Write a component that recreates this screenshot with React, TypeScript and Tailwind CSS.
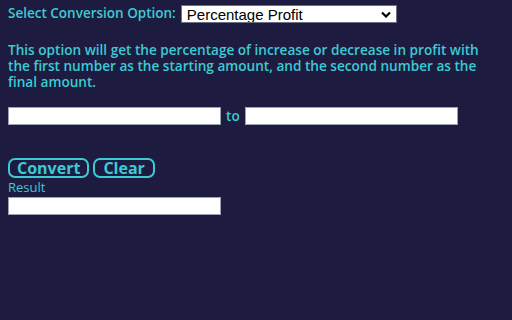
import { useState } from 'react';

const options = ['Percentage Profit', 'Percentage Change', 'Percentage Of'];

export default function App() {
  const [option, setOption] = useState(options[0]);
  const [first, setFirst] = useState('');
  const [second, setSecond] = useState('');
  const [result, setResult] = useState('');

  const convert = () => {
    const a = parseFloat(first);
    const b = parseFloat(second);
    if (isNaN(a) || isNaN(b) || a === 0) return;
    setResult((((b - a) / a) * 100).toFixed(2) + '%');
  };

  const clear = () => {
    setFirst('');
    setSecond('');
    setResult('');
  };

  return (
    <div className="w-[512px] h-[320px] bg-[#1e1b40] text-[#3ccad3] px-2 pt-[5px] font-['Open_Sans','Noto_Sans',sans-serif] overflow-hidden">
      {/* Option select */}
      <div className="flex items-center h-[18px]">
        <span className="text-[13.5px] font-semibold leading-none">Select Conversion Option:</span>
        <div className="relative flex ml-[5px]">
          <select
            value={option}
            onChange={(e) => setOption(e.target.value)}
            className="appearance-none w-[216px] h-[18px] bg-white text-black text-[15px] leading-none pl-[5px] border border-gray-500 font-['Liberation_Sans',Arial,sans-serif] outline-none"
          >
            {options.map((o) => (
              <option key={o} value={o}>
                {o}
              </option>
            ))}
          </select>
          <svg
            className="absolute right-[6px] top-[6px] w-[10px] h-[7px] pointer-events-none"
            viewBox="0 0 10 7"
            fill="none"
            stroke="black"
            strokeWidth="2.2"
          >
            <path d="M1 1.5l4 4 4-4" />
          </svg>
        </div>
      </div>

      {/* Description */}
      <p className="mt-[19px] text-[13.6px] font-semibold leading-[16px] w-[490px]">
        This option will get the percentage of increase or decrease in profit with the first number as the starting
        amount, and the second number as the final amount.
      </p>

      {/* Inputs */}
      <div className="mt-[16px] flex items-center">
        <input
          value={first}
          onChange={(e) => setFirst(e.target.value)}
          className="w-[213px] h-[18px] bg-white border border-gray-400 text-black text-xs px-1 outline-none"
        />
        <span className="mx-[5px] text-[13.6px] font-semibold">to</span>
        <input
          value={second}
          onChange={(e) => setSecond(e.target.value)}
          className="w-[213px] h-[18px] bg-white border border-gray-400 text-black text-xs px-1 outline-none"
        />
      </div>

      {/* Buttons */}
      <div className="mt-[32px] flex gap-[4px]">
        <button
          onClick={convert}
          className="h-[20px] px-[7px] border-2 border-[#3ccad3] rounded-[7px] text-[16px] font-bold leading-none"
        >
          Convert
        </button>
        <button
          onClick={clear}
          className="h-[20px] px-[8px] border-2 border-[#3ccad3] rounded-[7px] text-[16px] font-bold leading-none"
        >
          Clear
        </button>
      </div>

      {/* Result */}
      <div className="text-[13px] font-medium leading-[16px] mt-[1px] -mb-[3px]">Result</div>
      <input
        readOnly
        value={result}
        className="w-[213px] h-[18px] bg-white border border-gray-400 text-black text-xs px-1 outline-none"
      />
    </div>
  );
}
